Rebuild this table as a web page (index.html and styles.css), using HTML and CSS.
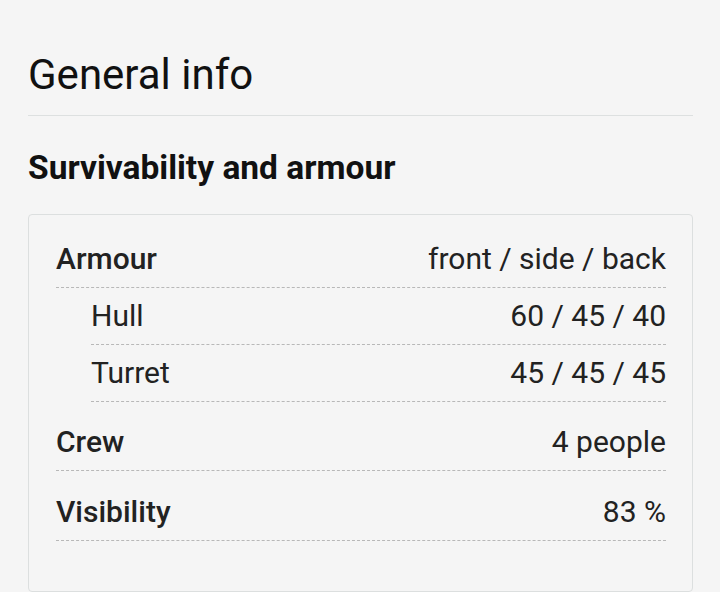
FILE: index.html
```html
<!DOCTYPE html>
<html lang="en">
<head>
    <meta charset="UTF-8">
    <meta name="viewport" content="width=device-width, initial-scale=1.0">
    <title>General info</title>
    <link rel="stylesheet" href="styles.css">
</head>
<body>

<div class="page">
    <h1 class="page-title">General info</h1>

    <h2 class="section-title">Survivability and armour</h2>

    <div class="card">
        <div class="row">
            <span class="label">Armour</span>
            <span class="value">front / side / back</span>
        </div>
        <div class="row sub">
            <span class="label">Hull</span>
            <span class="value">60 / 45 / 40</span>
        </div>
        <div class="row sub">
            <span class="label">Turret</span>
            <span class="value">45 / 45 / 45</span>
        </div>
        <div class="row main">
            <span class="label">Crew</span>
            <span class="value">4 people</span>
        </div>
        <div class="row main last">
            <span class="label">Visibility</span>
            <span class="value">83 %</span>
        </div>
    </div>
</div>

</body>
</html>
```

FILE: styles.css
```css
* {
    margin: 0;
    padding: 0;
    box-sizing: border-box;
}
body {
    font-family: Roboto, "Liberation Sans", sans-serif;
    background-color: #f5f5f5;
    color: #222;
}
.page {
    padding: 51px 27px 0 28px;
}
.page-title {
    font-size: 42px;
    font-weight: 400;
    line-height: 48px;
    color: #111;
    padding-bottom: 16px;
    border-bottom: 1px solid #dde0e0;
}
.section-title {
    font-size: 33.5px;
    font-weight: 700;
    line-height: 38px;
    color: #111;
    margin-top: 33px;
}
.card {
    margin-top: 27px;
    border: 1px solid #dcdfdf;
    border-radius: 4px;
    padding: 16px 26px 50px 27px;
}
.row {
    display: flex;
    justify-content: space-between;
    align-items: baseline;
    font-size: 30px;
    line-height: 32px;
    padding: 12px 0;
    border-bottom: 1px dashed #b8b8b8;
}
.row .label {
    font-weight: 500;
}
.row.sub {
    margin-left: 35px;
}
.row.sub .label {
    font-weight: 400;
}
.row.main {
    margin-top: 12px;
}
.row.last {
    margin-top: 13px;
}
```
